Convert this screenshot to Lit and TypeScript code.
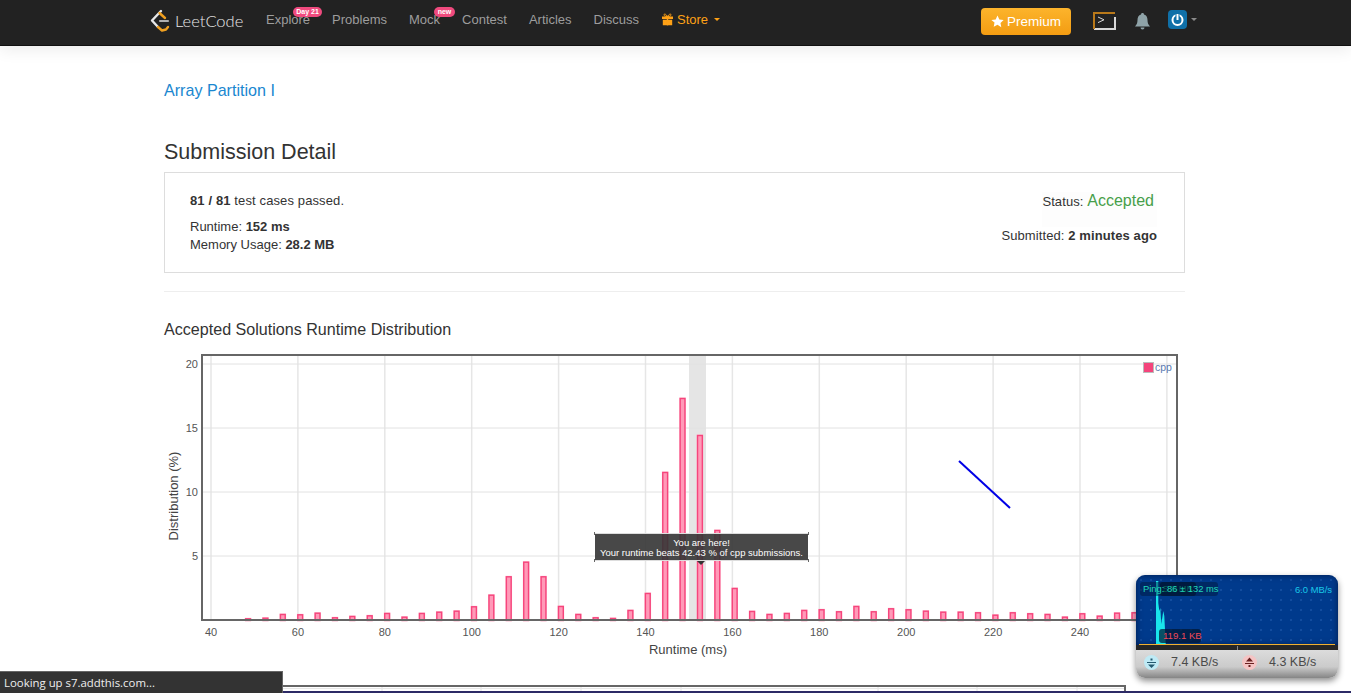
import { LitElement, html, css, svg } from "lit";
import { customElement } from "lit/decorators.js";

// bar height in px above the axis, one every 4 ms starting at 48
const BARS = [
  1.7, 2.3, 6, 5.7, 7.3, 2.7, 4, 4.7, 7, 3.3, 7, 8.3, 9.3, 13.7, 25.3, 43.7, 58.3, 43.7, 14, 6, 2.7, 2,
  10, 27, 148, 222, 185, 90, 32, 9, 6, 7, 10, 10.7, 8.7, 14, 8.7, 11.7, 10.7, 9.3, 8.3, 8.3, 7.7, 5.3,
  7.7, 6.7, 6, 3.3, 6.7, 4.3, 7.3, 7.7,
];

// the chart svg starts at page (164, 345)
const OX = 164;
const OY = 345;
const xAt = (v: number) => 211 + (v - 40) * 4.345 - OX;
const yAt = (p: number) => 620 - p * 12.8 - OY;

@customElement("app-root")
export class AppRoot extends LitElement {
  static styles = css`
    :host {
      display: block;
      position: relative;
      height: 693px;
      overflow: hidden;
      background: #fff;
      font-family: "Liberation Sans", Arial, sans-serif;
      font-size: 14px;
      color: #333;
    }

    .nav {
      height: 46px;
      box-sizing: border-box;
      background: #222;
      border-bottom: 1px solid #111;
      box-shadow: 0 4px 16px rgba(0, 0, 0, 0.08);
      display: flex;
      align-items: center;
      padding: 0 154px 3px 150px;
      color: #9d9d9d;
    }
    .logo {
      display: flex;
      align-items: center;
      width: 116px;
      gap: 4px;
      color: #e8e8e8;
      font-family: Lato, sans-serif;
      font-weight: 300;
      font-size: 16.5px;
      margin-bottom: 1px;
    }
    .links {
      display: flex;
      gap: 22px;
      font-size: 13px;
      margin-bottom: 3px;
    }
    .link {
      position: relative;
    }
    .badge {
      position: absolute;
      top: -5px;
      height: 10px;
      line-height: 10px;
      border-radius: 5px;
      background: #ef4a7e;
      color: #fff;
      font-size: 7px;
      font-weight: bold;
      text-align: center;
    }
    .badge.day {
      left: 27px;
      width: 29px;
    }
    .badge.new {
      left: 25px;
      width: 21px;
    }
    .store {
      color: #fea116;
      display: flex;
      align-items: center;
      gap: 3px;
    }
    .caret {
      display: inline-block;
      width: 0;
      height: 0;
      border: 3px solid transparent;
      border-top-color: currentColor;
      border-bottom: 0;
      margin-left: 2px;
    }
    .store .caret {
      margin-left: 3px;
    }
    .nav-right {
      margin-left: auto;
      display: flex;
      align-items: center;
    }
    .premium {
      width: 90px;
      height: 27px;
      box-sizing: border-box;
      display: flex;
      align-items: center;
      justify-content: center;
      gap: 3px;
      border-radius: 4px;
      background: linear-gradient(#fcb42c, #f39c12);
      color: #fff;
      font-size: 13.5px;
      margin-right: 22px;
    }
    .term {
      margin-right: 19px;
    }
    .bell {
      margin-right: 18px;
    }
    .user {
      color: #8a8a8a;
      display: flex;
      align-items: center;
      gap: 2px;
      margin-bottom: 3px;
    }

    .page {
      width: 1021px;
      margin-left: 164px;
    }
    .problem {
      display: block;
      margin-top: 33px;
      font-size: 16.100px;
      line-height: 22px;
      color: #1a87d0;
    }
    h3 {
      margin: 40px 0 9px;
      font-size: 21.500px;
      line-height: 22px;
      font-weight: 400;
    }
    .card {
      height: 101px;
      box-sizing: border-box;
      border: 1px solid #ddd;
      padding: 19px 27px 0 25px;
      display: flex;
      justify-content: space-between;
    }
    .card p {
      margin: 0;
      line-height: 18px;
      font-size: 13px;
    }
    .card .passed {
      margin-bottom: 8px;
      letter-spacing: 0.12px;
    }
    .right {
      text-align: right;
    }
    .card .status {
      display: inline-block;
      padding: 0 3px 17px 0;
      height: 18px;
      background: #fdfdfd;
      letter-spacing: 0.1px;
    }
    .status span {
      color: #479f4a;
      font-size: 16px;
      letter-spacing: 0;
    }
    .submitted {
      letter-spacing: 0.1px;
    }
    hr {
      margin: 18px 0 27px;
      border: 0;
      border-top: 1px solid #eee;
    }
    h4 {
      margin: 0 0 6px;
      font-size: 16.100px;
      line-height: 20px;
      font-weight: 400;
    }
    .chart {
      position: relative;
      height: 340px;
    }
    .chart svg {
      display: block;
      font-family: "Liberation Sans", Arial, sans-serif;
    }
    .tip {
      position: absolute;
      left: 431px;
      top: 188px;
      width: 213px;
      height: 28px;
      box-sizing: border-box;
      padding-top: 4px;
      background: rgba(52, 52, 52, 0.9);
      border-top: 1px solid #ddd;
      border-bottom: 1px solid #ddd;
      color: #fff;
      font-size: 9.500px;
      line-height: 9.500px;
      text-align: center;
    }
    .tip::before {
      content: "";
      position: absolute;
      left: -1px;
      right: -1px;
      top: -2px;
      bottom: -2px;
      background:
        linear-gradient(#666, #666) left top / 1px 3px no-repeat,
        linear-gradient(#666, #666) right top / 1px 3px no-repeat,
        linear-gradient(#666, #666) left bottom / 1px 3px no-repeat,
        linear-gradient(#666, #666) right bottom / 1px 3px no-repeat;
    }
    .tip::after {
      content: "";
      position: absolute;
      left: 102px;
      bottom: -5px;
      border: 4px solid transparent;
      border-top-color: #333;
      border-bottom: 0;
    }
    .next {
      display: block;
    }

    .statusbar {
      position: absolute;
      left: 0;
      bottom: 0;
      width: 283px;
      height: 22px;
      box-sizing: border-box;
      padding-left: 4px;
      background: #333;
      border-top: 1px solid #666;
      border-right: 1px solid #666;
      color: #eee;
      font-family: "Open Sans", sans-serif;
      font-size: 11.400px;
      line-height: 21px;
    }
    .edge {
      position: absolute;
      left: 0;
      right: 0;
      bottom: 0;
      height: 2px;
      background: #2c2a66;
    }

    .meter {
      position: absolute;
      left: 1136px;
      top: 575px;
      width: 202px;
      height: 103px;
      border-radius: 9px;
      overflow: hidden;
      box-shadow: 0 3px 6px rgba(0, 0, 0, 0.45);
      display: flex;
      flex-direction: column;
    }
    .graph {
      position: relative;
      height: 70px;
      background-color: #003a8c;
      background-image: radial-gradient(rgba(120, 170, 255, 0.35) 0.6px, transparent 0.8px);
      background-size: 10px 10px;
      box-shadow: inset 0 0 6px #001c4c;
    }
    .graph svg {
      position: absolute;
      left: 0;
      top: 0;
    }
    .pill {
      position: absolute;
      background: rgba(0, 22, 50, 0.72);
      border-radius: 3px;
      font-size: 9.400px;
      line-height: 14px;
      white-space: nowrap;
    }
    .ghost {
      left: 24px;
      top: 7px;
      width: 33px;
      padding-left: 3px;
      color: #0f8f70;
    }
    .ping {
      left: 4px;
      top: 7px;
      width: 75px;
      padding-left: 3px;
      color: #1fd8b8;
      background: rgba(0, 22, 50, 0.45);
    }
    .down-total {
      left: 23px;
      top: 54px;
      width: 38px;
      padding-left: 4px;
      color: #f04858;
      font-size: 9.600px;
    }
    .max {
      position: absolute;
      right: 6px;
      top: 8px;
      color: #19c8e8;
      font-size: 9.400px;
      line-height: 14px;
    }
    .strip {
      position: relative;
      height: 5px;
      background: #262626;
    }
    .strip::after {
      content: "";
      position: absolute;
      left: 101px;
      top: 1px;
      width: 1px;
      height: 4px;
      background: #888;
    }
    .rates {
      flex: 1;
      background: linear-gradient(#dcdcdc, #cbcbcb 60%, #858585);
      display: grid;
      grid-template-columns: 98px 1fr;
      align-items: center;
      font-size: 12.500px;
      color: #4a4a4a;
      padding: 0 0 4px 8px;
    }
    .rate {
      display: flex;
      align-items: center;
      gap: 12px;
    }
  `;

  private chart() {
    const grid = [];
    for (let v = 40; v <= 240; v += 20) {
      grid.push(svg`<line x1=${xAt(v)} x2=${xAt(v)} y1="11" y2="275" stroke="#e6e6e6" stroke-width="1.5"></line>
        <text x=${xAt(v)} y="291" text-anchor="middle" font-size="11" fill="#555">${v}</text>`);
    }
    grid.push(svg`<line x1=${xAt(260)} x2=${xAt(260)} y1="11" y2="275" stroke="#e6e6e6" stroke-width="1.5"></line>`);
    for (const p of [5, 10, 15, 20]) {
      grid.push(svg`<line x1="39" x2="1012" y1=${yAt(p)} y2=${yAt(p)} stroke="#e2e2e2" stroke-width="1"></line>
        <text x="34" y=${yAt(p) + 4} text-anchor="end" font-size="11" fill="#555">${p}</text>`);
    }
    const bars = BARS.map((h, i) => {
      const x = xAt(48 + i * 4) + 2.3;
      return svg`<rect x=${x - 3.3} y=${275 - h - 0.5} width="6.6" height=${h + 0.5} fill="#ffc0d2"></rect>
        <rect x=${x - 2.4} y=${275 - h + 0.5} width="4.8" height=${h} fill="#ff9ab8" stroke="#f6457c" stroke-width="1.4"></rect>`;
    });
    return html`<svg width="1021" height="340" viewBox="0 0 1021 340">
      <rect x="525" y="10" width="17" height="265" fill="#e5e5e5"></rect>
      ${grid} ${bars}
      <rect x="38" y="10" width="975" height="265" fill="none" stroke="#666" stroke-width="2"></rect>
      <line x1="795" y1="116" x2="846" y2="163" stroke="#0000e6" stroke-width="2"></line>
      <rect x="979.500" y="17.500" width="10" height="10" fill="#f4447c" stroke="#bbb"></rect>
      <text x="991" y="25.500" font-size="10.500" fill="#5a7ab0">cpp</text>
      <text x="524" y="309" text-anchor="middle" font-size="13" fill="#444">Runtime (ms)</text>
      <text transform="translate(14 151) rotate(-90)" text-anchor="middle" font-size="13" fill="#444">Distribution (%)</text>
    </svg>`;
  }

  render() {
    return html`
      <div class="nav">
        <div class="logo">
          <svg width="21" height="24" viewBox="0 0 21 24" fill="none" stroke-linecap="round" stroke-linejoin="round">
            <path d="M11 2 2 11.500l6 6.500" stroke="#e8e8e8" stroke-width="2.400"></path>
            <path d="M9.500 4 15 9" stroke="#f0a020" stroke-width="2.400"></path>
            <path d="M8 18l4 3.500 4-1 2-2.500" stroke="#f0a020" stroke-width="2.400"></path>
            <path d="M10 12h8" stroke="#b0b0b0" stroke-width="2.200"></path>
          </svg>
          LeetCode
        </div>
        <div class="links">
          <span class="link">Explore<span class="badge day">Day 21</span></span>
          <span class="link">Problems</span>
          <span class="link">Mock<span class="badge new">new</span></span>
          <span class="link">Contest</span>
          <span class="link">Articles</span>
          <span class="link">Discuss</span>
          <span class="link store">
            <svg width="13" height="13" viewBox="0 0 13 13" fill="#fea116">
              <path d="M1 3.500h11v2.500H1zM1.800 6.800h4v5.500h-4zM7.200 6.800h4v5.500h-4zM5.800 3.500h1.400v9H5.800z"></path>
              <path d="M6.500 3.500C4 3.500 3 2.800 3 1.800S4.500.4 6.500 3.500C8.500.4 10 .8 10 1.800s-1 1.700-3.500 1.700z" fill="none" stroke="#fea116"></path>
            </svg>
            Store<span class="caret"></span>
          </span>
        </div>
        <div class="nav-right">
          <div class="premium">
            <svg width="13" height="13" viewBox="0 0 24 24" fill="#fff">
              <path d="M12 1l3.400 7.300 7.900 1-5.800 5.500 1.500 7.900L12 18l-7 3.700 1.500-7.900L.7 9.300l7.900-1z"></path>
            </svg>
            Premium
          </div>
          <svg class="term" width="23" height="18" viewBox="0 0 23 18" fill="none">
            <path d="M22 5V17H1" stroke="#d8d8d8" stroke-width="2"></path>
            <path d="M1 17V1H22" stroke="#b9791a" stroke-width="2"></path>
            <path d="M5 5l6 2.800-6 2.800" stroke="#d8d8d8"></path>
          </svg>
          <svg class="bell" width="15" height="17" viewBox="0 0 15 17" fill="#8fa3a8">
            <path d="M7.500 0c1 0 1.500.6 1.500 1.500C11.500 2.300 12.500 4.500 12.500 7c0 3 .8 4.500 2.500 6.500H0C1.700 11.500 2.500 10 2.500 7c0-2.500 1-4.700 3.500-5.500C6 .6 6.500 0 7.500 0zM5.500 14.500h4a2 2 0 0 1-4 0z"></path>
          </svg>
          <div class="user">
            <svg width="19" height="19" viewBox="0 0 19 19">
              <rect width="19" height="19" rx="4" fill="#1070a8"></rect>
              <circle cx="9.500" cy="10" r="5" fill="none" stroke="#fff" stroke-width="2"></circle>
              <path d="M9.500 3v6" stroke="#1070a8" stroke-width="4"></path>
              <path d="M9.500 4v6" stroke="#fff" stroke-width="2"></path>
            </svg>
            <span class="caret"></span>
          </div>
        </div>
      </div>

      <div class="page">
        <a class="problem">Array Partition I</a>
        <h3>Submission Detail</h3>
        <div class="card">
          <div>
            <p class="passed"><b>81 / 81</b> test cases passed.</p>
            <p>Runtime: <b>152 ms</b></p>
            <p>Memory Usage: <b>28.2 MB</b></p>
          </div>
          <div class="right">
            <p class="status">Status: <span>Accepted</span></p>
            <p class="submitted">Submitted: <b>2 minutes ago</b></p>
          </div>
        </div>
        <hr />
        <h4>Accepted Solutions Runtime Distribution</h4>
        <div class="chart">
          ${this.chart()}
          <div class="tip">You are here!<br />Your runtime beats 42.43 % of cpp submissions.</div>
        </div>
        <svg class="next" width="1021" height="8" viewBox="0 0 1021 8">
          ${[218, 317, 417, 517, 714, 813, 913].map(
            (x) => svg`<line x1=${x} x2=${x} y1="0" y2="8" stroke="#e2e2e2"></line>`
          )}
          <line x1="38" x2="962" y1="3.500" y2="3.500" stroke="#e6e6e6"></line>
          <path d="M38 8V1H961V8" fill="none" stroke="#666" stroke-width="2"></path>
        </svg>
      </div>

      <div class="edge"></div>
      <div class="statusbar">Looking up s7.addthis.com...</div>

      <div class="meter">
        <div class="graph">
          <svg width="202" height="70" viewBox="0 0 202 70">
            <path d="M20 69V6h2.300V28l1 8 1-3 1 16 2-13 1 5 1.500 29z" fill="#19e6ec"></path>
            <line x1="3" x2="199" y1="69.500" y2="69.500" stroke="#f0b030"></line>
          </svg>
          <div class="max">6.0 MB/s</div>
          <div class="pill ghost">5.8 MB</div>
          <div class="pill ping">Ping: 86 ± 132 ms</div>
          <div class="pill down-total">119.1 KB</div>
        </div>
        <div class="strip"></div>
        <div class="rates">
          <div class="rate">
            <svg width="15" height="15" viewBox="0 0 15 15">
              <circle cx="7.500" cy="7.500" r="7.500" fill="#bfeaf5"></circle>
              <path d="M3 7h9v1H3zM4 9.500h7L7.500 13zM6.500 3.500h2v2h-2z" fill="#245a70"></path>
            </svg>
            7.4 KB/s
          </div>
          <div class="rate">
            <svg width="15" height="15" viewBox="0 0 15 15">
              <circle cx="7.500" cy="7.500" r="7.500" fill="#f5c4c4"></circle>
              <path d="M3 8h9v1H3zM4 6.500h7L7.500 2.500zM6.500 10h2v2h-2z" fill="#6a2020"></path>
            </svg>
            4.3 KB/s
          </div>
        </div>
      </div>
    `;
  }
}
